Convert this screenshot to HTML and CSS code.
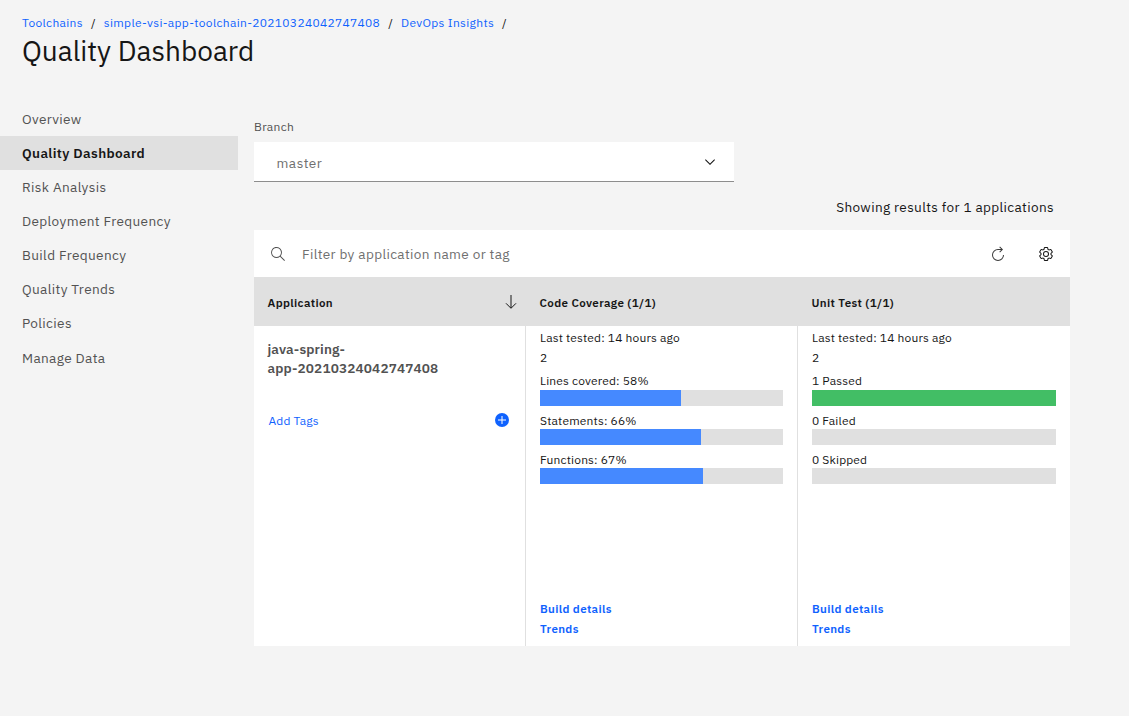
FILE: index.html
```html
<!DOCTYPE html>
<html lang="en">
<head>
<meta charset="utf-8">
<title>Quality Dashboard</title>
<link rel="stylesheet" href="styles.css">
</head>
<body>
<header class="page-header">
  <nav class="breadcrumb">
    <a class="crumb">Toolchains</a><span class="slash">/</span>
    <a class="crumb">simple-vsi-app-toolchain-20210324042747408</a><span class="slash">/</span>
    <a class="crumb">DevOps Insights</a><span class="slash">/</span>
  </nav>
  <h1 class="title">Quality Dashboard</h1>
</header>
<div class="layout">
  <nav class="sidebar">
    <a class="nav-item">Overview</a>
    <a class="nav-item selected">Quality Dashboard</a>
    <a class="nav-item">Risk Analysis</a>
    <a class="nav-item">Deployment Frequency</a>
    <a class="nav-item">Build Frequency</a>
    <a class="nav-item">Quality Trends</a>
    <a class="nav-item">Policies</a>
    <a class="nav-item nav-last">Manage Data</a>
  </nav>
  <main class="content">
    <div class="label">Branch</div>
    <div class="select"><span>master</span>
      <svg class="icon" viewBox="0 0 16 16"><path d="M8 11L3 6l.7-.7L8 9.6l4.3-4.3L13 6z"/></svg>
    </div>
    <div class="results">Showing results for 1 applications</div>
    <div class="toolbar">
      <svg class="icon search" viewBox="0 0 16 16"><path d="M15 14.3L10.7 10c1.9-2.3 1.6-5.8-.7-7.7S4.2.7 2.3 3 .7 8.8 3 10.7c2 1.7 5 1.7 7 0l4.3 4.3.7-.7zM2 6.5C2 4 4 2 6.5 2S11 4 11 6.5 9 11 6.5 11 2 9 2 6.5z"/></svg>
      <span class="placeholder">Filter by application name or tag</span>
      <svg class="icon restart" viewBox="0 0 32 32"><path d="M26,18A10,10,0,1,1,16,8h6.1821l-3.5844,3.5854L20,13l6-6L20,1,18.5977,2.414,22.1851,6H16A12,12,0,1,0,28,18Z"/></svg>
      <svg class="icon" viewBox="0 0 32 32"><path d="M27,16.76c0-.25,0-.5,0-.76s0-.51,0-.77l1.92-1.68A2,2,0,0,0,29.3,11L26.94,7a2,2,0,0,0-1.73-1,2,2,0,0,0-.64.1l-2.43.82a11.35,11.35,0,0,0-1.31-.75l-.51-2.52a2,2,0,0,0-2-1.61H13.64a2,2,0,0,0-2,1.61l-.51,2.52a11.48,11.48,0,0,0-1.32.75L7.43,6.06A2,2,0,0,0,6.79,6,2,2,0,0,0,5.06,7L2.7,11a2,2,0,0,0,.41,2.51L5,15.24c0,.25,0,.5,0,.76s0,.51,0,.77L3.11,18.45A2,2,0,0,0,2.7,21L5.06,25a2,2,0,0,0,1.73,1,2,2,0,0,0,.64-.1l2.43-.82a11.35,11.35,0,0,0,1.31.75l.51,2.52a2,2,0,0,0,2,1.61h4.72a2,2,0,0,0,2-1.61l.51-2.52a11.48,11.48,0,0,0,1.32-.75l2.42.82a2,2,0,0,0,.64.1,2,2,0,0,0,1.73-1L29.3,21a2,2,0,0,0-.41-2.51ZM25.21,24l-3.43-1.16a8.86,8.86,0,0,1-2.71,1.57L18.36,28H13.64l-.71-3.55a9.36,9.36,0,0,1-2.7-1.57L6.79,24,4.43,20l2.72-2.4a8.9,8.9,0,0,1,0-3.13L4.43,12,6.79,8l3.43,1.16a8.86,8.86,0,0,1,2.71-1.57L13.64,4h4.72l.71,3.55a9.36,9.36,0,0,1,2.7,1.57L25.21,8,27.57,12l-2.72,2.4a8.9,8.9,0,0,1,0,3.13L27.57,20Z"/><path d="M16,22a6,6,0,1,1,6-6A5.94,5.94,0,0,1,16,22Zm0-10a3.91,3.91,0,0,0-4,4,3.91,3.91,0,0,0,4,4,3.91,3.91,0,0,0,4-4A3.91,3.91,0,0,0,16,12Z"/></svg>
    </div>
    <div class="table">
      <div class="th"><span>Application</span>
        <svg class="arrow" viewBox="0 0 12 16"><path d="M6 1v13M1 9.3l5 5 5-5"/></svg>
      </div>
      <div class="th"><span>Code Coverage (1/1)</span></div>
      <div class="th"><span>Unit Test (1/1)</span></div>
      <div class="cell app">
        <div class="app-name">java-spring-<br>app-20210324042747408</div>
        <div class="tags"><a>Add Tags</a>
          <svg class="add" viewBox="0 0 14 14"><circle cx="7" cy="7" r="7"/><path d="M7 3v8M3 7h8"/></svg>
        </div>
      </div>
      <div class="cell">
        <div class="tested">Last tested: 14 hours ago</div>
        <div class="count">2</div>
        <div class="metric first">Lines covered: 58%</div>
        <div class="bar"><div class="fill" style="width:58%"></div></div>
        <div class="metric">Statements: 66%</div>
        <div class="bar"><div class="fill" style="width:66.2%"></div></div>
        <div class="metric">Functions: 67%</div>
        <div class="bar"><div class="fill" style="width:67%"></div></div>
        <div class="links"><a>Build details</a><a>Trends</a></div>
      </div>
      <div class="cell">
        <div class="tested">Last tested: 14 hours ago</div>
        <div class="count">2</div>
        <div class="metric first">1 Passed</div>
        <div class="bar"><div class="fill passed" style="width:100%"></div></div>
        <div class="metric">0 Failed</div>
        <div class="bar"></div>
        <div class="metric">0 Skipped</div>
        <div class="bar"></div>
        <div class="links"><a>Build details</a><a>Trends</a></div>
      </div>
    </div>
  </main>
</div>
</body>
</html>
```
FILE: styles.css
```css
* { box-sizing: border-box; }
body {
  margin: 0;
  background: #f4f4f4;
  color: #161616;
  font: 12px/16px "IBM Plex Sans", "Noto Sans", sans-serif;
  letter-spacing: 0.16px;
}
a { color: #0f62fe; }
svg { display: block; flex: none; }
.page-header { height: 102px; padding: 15px 22px 0; }
.breadcrumb { display: flex; white-space: nowrap; letter-spacing: 0.32px; }
.slash { margin: 0 8px; }
.title { margin: 2px 0 0; font-size: 28px; line-height: 36px; font-weight: 400; letter-spacing: 0; }
.layout { display: flex; }
.sidebar { width: 238px; flex: none; display: flex; flex-direction: column; }
.nav-item {
  height: 34px;
  padding-left: 22px;
  font-size: 13.6px;
  letter-spacing: 0.36px;
  line-height: 34px;
  color: #525252;
}
.nav-item.selected { background: #e0e0e0; color: #161616; font-weight: 600; }
.nav-last { margin-top: 1px; }
.content { width: 816px; margin-left: 16px; padding-top: 17px; }
.label { height: 23px; color: #525252; letter-spacing: 0.32px; }
.select {
  display: flex;
  align-items: center;
  justify-content: space-between;
  width: 480px;
  height: 40px;
  padding: 2px 16px 0 22.5px;
  background: #fff;
  border-bottom: 1px solid #8d8d8d;
  font-size: 13.6px;
  letter-spacing: 0.5px;
  color: #6f6f6f;
}
.icon { width: 16px; height: 16px; fill: #161616; }
.select .icon { margin-top: -2px; }
.results {
  height: 48px;
  padding: 15px 16px 0 0;
  text-align: right;
  font-size: 13.6px;
  line-height: 20px;
  letter-spacing: 0.35px;
}
.toolbar { display: flex; align-items: center; height: 47px; padding: 1px 16px 0; background: #fff; }
.search { fill: #525252; }
.placeholder { margin-left: 16px; font-size: 13.6px; color: #6f6f6f; flex: 1; letter-spacing: 0.35px; }
.restart { margin-right: 32px; fill: #393939; }
.table { display: grid; grid-template-columns: repeat(3, 272px); grid-template-rows: 49px 320px; background: #fff; }
.th {
  display: flex;
  align-items: center;
  justify-content: space-between;
  padding: 3px 9px 0 13.5px;
  background: #e0e0e0;
  font-size: 11.6px;
  letter-spacing: 0.36px;
  font-weight: 600;
}
.arrow { width: 12px; height: 16px; margin-top: -3px; fill: none; stroke: #161616; }
.cell { display: flex; flex-direction: column; padding: 4px 14px 7px; }
.cell:not(:last-child) { border-right: 1px solid #e0e0e0; }
.cell.app { padding: 14px 16px 0 13.5px; }
.app-name { font-size: 13.6px; line-height: 19px; font-weight: 600; color: #525252; letter-spacing: 0.13px; }
.tags { display: flex; align-items: center; justify-content: space-between; margin: 34px 0 0 1px; }
.tags a { padding-top: 1px; margin-bottom: -1px; }
.add { width: 14px; height: 14px; fill: #0f62fe; stroke: #fff; }
.add circle { stroke: none; }
.count { margin-top: 4px; }
.metric { height: 23px; padding-top: 7px; }
.metric.first { height: 24px; }
.bar { height: 16px; background: #e0e0e0; }
.fill { height: 16px; background: #4589ff; }
.passed { background: #42be65; }
.links {
  margin-top: auto;
  display: flex;
  flex-direction: column;
  font-size: 11.6px;
  letter-spacing: 0.34px;
  line-height: 20px;
  font-weight: 600;
}
```
